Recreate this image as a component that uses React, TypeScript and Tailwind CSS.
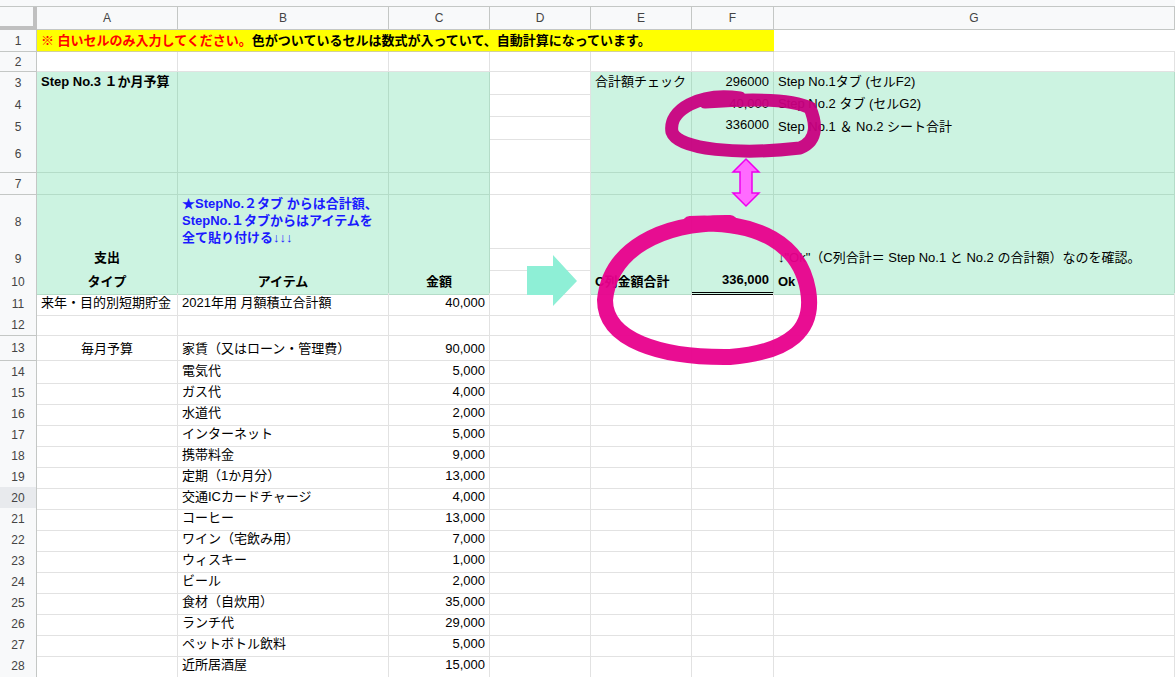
import React from 'react'

const cols = 'grid grid-cols-[37px_141px_211px_101px_101px_101px_82px_1fr]'
const font = { fontFamily: 'Arial, "Liberation Sans", "Noto Sans CJK JP", sans-serif' }

type Row = { n: number; h: string; green?: boolean; cells?: React.ReactNode[] }

const items: [string, string][] = [
  ['電気代', '5,000'], ['ガス代', '4,000'], ['水道代', '2,000'], ['インターネット', '5,000'],
  ['携帯料金', '9,000'], ['定期（1か月分）', '13,000'], ['交通ICカードチャージ', '4,000'],
  ['コーヒー', '13,000'], ['ワイン（宅飲み用）', '7,000'], ['ウィスキー', '1,000'], ['ビール', '2,000'],
  ['食材（自炊用）', '35,000'], ['ランチ代', '29,000'], ['ペットボトル飲料', '5,000'], ['近所居酒屋', '15,000'],
]

function Cell({ children, green, className = '' }: { children?: React.ReactNode; green?: boolean; className?: string }) {
  return (
    <div className={`border-r border-b ${green ? 'bg-[#ccf3e1] border-[#b4dcc8]' : 'border-[#e2e2e2]'} px-[4px] flex items-end pb-[2px] text-[13px] text-black whitespace-nowrap overflow-visible ${className}`}>
      {children}
    </div>
  )
}

export default function App() {
  const rows: Row[] = [
    { n: 3, h: 'h-[22px]', green: true },
    { n: 4, h: 'h-[21px]', green: true },
    { n: 5, h: 'h-[21px]', green: true },
    { n: 6, h: 'h-[37px]', green: true },
    { n: 7, h: 'h-[22px]', green: true },
    { n: 8, h: 'h-[53px]', green: true },
    { n: 9, h: 'h-[22px]', green: true },
    { n: 10, h: 'h-[23px]', green: true },
  ]
  const greenCells: Record<number, React.ReactNode[]> = {
    3: [<span className="font-bold">Step No.3 １か月予算</span>, null, null, null, '合計額チェック', <span className="ml-auto">296000</span>, 'Step No.1タブ (セルF2)'],
    4: [null, null, null, null, null, <span className="ml-auto">40,000</span>, 'Step No.2 タブ (セルG2)'],
    5: [null, null, null, null, null, <span className="ml-auto">336000</span>, 'Step No.1 ＆ No.2 シート合計'],
    6: [], 7: [],
    8: [null, <span className="font-bold text-[#1a1aff] leading-[17px] whitespace-normal">★StepNo.２タブ からは合計額、StepNo.１タブからはアイテムを全て貼り付ける↓↓↓</span>],
    9: [<span className="font-bold mx-auto">支出</span>, null, null, null, null, null, '↓"Ok"（C列合計＝ Step No.1 と No.2 の合計額）なのを確認。'],
    10: [<span className="font-bold mx-auto">タイプ</span>, <span className="font-bold mx-auto">アイテム</span>, <span className="font-bold mx-auto">金額</span>, null, <span className="font-bold">C列金額合計</span>, <span className="font-bold ml-auto">336,000</span>, <span className="font-bold">Ok</span>],
  }
  const lower: { n: number; h: string; c: React.ReactNode[] }[] = [
    { n: 11, h: 'h-[22px]', c: ['来年・目的別短期貯金', '2021年用 月額積立合計額', '40,000'] },
    { n: 12, h: 'h-[21px]', c: [] },
    { n: 13, h: 'h-[25px]', c: [<span className="mx-auto">毎月予算</span>, '家賃（又はローン・管理費）', '90,000'] },
    ...items.map(([a, b], i) => ({ n: 14 + i, h: 'h-[21px]', c: [null, a, b] as React.ReactNode[] })),
  ]
  return (
    <div className="relative w-[1175px] h-[677px] overflow-hidden bg-white" style={font}>
      <div className="h-[7px] bg-[#f8f9fa] border-b border-[#c4c7c5]" />
      <div className={`${cols} h-[23px] bg-[#f8f9fa] text-[12px] text-[#444]`}>
        <div className="border-r-4 border-b-4 border-[#c0c0c0]" />
        {['A', 'B', 'C', 'D', 'E', 'F', 'G'].map(l => (
          <div key={l} className="border-r border-b border-[#c4c7c5] flex items-center justify-center">{l}</div>
        ))}
      </div>
      <div className={`${cols} h-[22px]`}>
        <div className="bg-[#f8f9fa] border-r border-b border-[#c4c7c5] text-[12px] text-[#444] flex items-center justify-center">1</div>
        <div className="col-span-6 bg-[#ffff00] border-b border-[#d0d0a0] flex items-center px-[4px] text-[13px] font-bold whitespace-nowrap">
          <span className="text-[#ff0000]">※ 白いセルのみ入力してください。</span>色がついているセルは数式が入っていて、自動計算になっています。
        </div>
        <div className="border-b border-[#e2e2e2]" />
      </div>
      <div className={`${cols} h-[20px]`}>
        <div className="bg-[#f8f9fa] border-r border-b border-[#c4c7c5] text-[12px] text-[#444] flex items-center justify-center">2</div>
        {Array.from({ length: 7 }).map((_, i) => <Cell key={i} />)}
      </div>
      {rows.map(r => (
        <div key={r.n} className={`${cols} ${r.h}`}>
          <div className="bg-[#f8f9fa] border-r border-b border-[#c4c7c5] text-[12px] text-[#444] flex items-center justify-center">{r.n}</div>
          {Array.from({ length: 7 }).map((_, i) => {
            const v = greenCells[r.n]?.[i]
            const dbl = (i === 5 && (r.n === 4 || r.n === 5 || r.n === 10)) ? (r.n === 4 ? 'border-b-black' : 'border-b-[3px] border-b-black border-double') : ''
            return (
              <Cell key={i} green={i !== 3} className={`${dbl} ${r.n === 8 && i === 1 ? 'overflow-visible items-center' : ''}`}>{v}</Cell>
            )
          })}
        </div>
      ))}
      {lower.map(r => (
        <div key={r.n} className={`${cols} ${r.h}`}>
          <div className={`${r.n === 20 ? 'bg-[#e8eaed]' : 'bg-[#f8f9fa]'} border-r border-b border-[#c4c7c5] text-[12px] text-[#444] flex items-center justify-center`}>{r.n}</div>
          {Array.from({ length: 7 }).map((_, i) => (
            <Cell key={i} className={i === 2 ? 'justify-end' : ''}>{r.c[i]}</Cell>
          ))}
        </div>
      ))}
      <svg className="absolute left-0 top-0 pointer-events-none" width="1175" height="677">
        <polygon points="527,266 553,266 553,255 577,281 553,306 553,295 527,295" fill="#8eefd6" />
        <path d="M740 98 C700 92 668 110 672 132 C678 150 740 155 800 148 C820 140 815 120 810 108 C795 100 760 98 705 102" fill="none" stroke="#c8007f" strokeWidth="13" strokeLinecap="round" opacity="0.95" />
        <path d="M730 223 C660 222 610 250 605 300 C605 340 660 358 730 357 C790 352 815 330 808 290 C800 245 760 220 690 224" fill="none" stroke="#e8008c" strokeWidth="16" strokeLinecap="round" opacity="0.95" />
        <polygon points="746,159 759,172 752,172 752,193 759,193 746,206 733,193 740,193 740,172 733,172" fill="#ff6bff" stroke="#ee00ee" strokeWidth="1.5" />
      </svg>
    </div>
  )
}
